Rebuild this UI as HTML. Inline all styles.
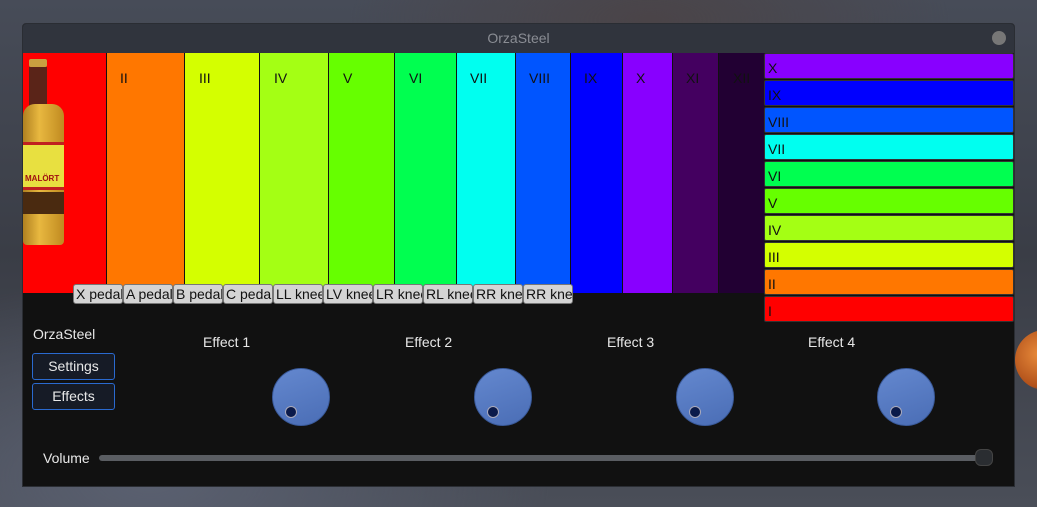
<!DOCTYPE html>
<html><head><style>
*{margin:0;padding:0;box-sizing:border-box}
body{width:1037px;height:507px;overflow:hidden;position:relative;font-family:"Liberation Sans","DejaVu Sans",sans-serif;
background:radial-gradient(ellipse 300px 120px at 650px 20px,#4a4448,transparent),radial-gradient(ellipse 400px 200px at 150px 480px,#5a6070,transparent),linear-gradient(180deg,#474c58 0%,#3a3d46 50%,#4a4e58 100%);}
.abs{position:absolute}
.win{left:22px;top:23px;width:993px;height:464px;background:#111;border:1px solid #2a2d33;border-radius:4px 4px 0 0;overflow:hidden}
.title{left:0;top:0;width:100%;height:29px;background:#30343d;color:#8a8d94;font-size:14px;text-align:center;line-height:29px}
.col{top:29px;height:240px;border-left:1px solid #111;font-size:14px;color:#111}
.col span{position:absolute;top:17px}
.row{left:741px;width:250px;height:26px;border:1px solid #333;border-radius:2px;font-size:14px;color:#111;padding-left:3px;line-height:28px}
.ped{top:260px;height:20px;width:50px;background:#d4d4d4;border:1px solid #777;border-radius:3px;font-size:14px;color:#111;line-height:18px;padding-left:2px;overflow:hidden;white-space:nowrap}
.lbl{color:#e8e8e8;font-size:14px}
.btn{left:9px;width:83px;height:27px;border:1px solid #2a6ad0;border-radius:3px;background:#161b26;color:#e8e8e8;font-size:14px;text-align:center;line-height:25px}
.knob{width:58px;height:58px;border-radius:50%;background:linear-gradient(160deg,#6488cf,#4a6db5);border:1px solid #3a5a9a;top:344px}
.dot{width:12px;height:12px;border-radius:50%;background:#0a1a4a;border:1px solid #aab;position:absolute;left:12px;top:37px}
</style></head><body>
<div class="abs" style="left:1015px;top:330px;width:60px;height:60px;border-radius:50%;background:radial-gradient(circle at 40% 40%,#e88a3a,#b0501a 65%,transparent 72%)"></div>
<div class="abs win">
 <div class="abs title">OrzaSteel<div class="abs" style="right:8px;top:7px;width:14px;height:14px;border-radius:50%;background:#777"></div></div>
 <div class="abs col" style="left:0;width:84px;background:#ff0000;border-left:none"></div>
 <div class="abs col" style="left:83px;width:78px;background:#ff7700"><span style="left:13px">II</span></div>
 <div class="abs col" style="left:161px;width:75px;background:#d4ff00"><span style="left:14px">III</span></div>
 <div class="abs col" style="left:236px;width:69px;background:#a4ff14"><span style="left:14px">IV</span></div>
 <div class="abs col" style="left:305px;width:66px;background:#66ff00"><span style="left:14px">V</span></div>
 <div class="abs col" style="left:371px;width:62px;background:#00ff50"><span style="left:14px">VI</span></div>
 <div class="abs col" style="left:433px;width:59px;background:#00fff0"><span style="left:13px">VII</span></div>
 <div class="abs col" style="left:492px;width:55px;background:#0055ff"><span style="left:13px">VIII</span></div>
 <div class="abs col" style="left:547px;width:52px;background:#0000ff"><span style="left:13px">IX</span></div>
 <div class="abs col" style="left:599px;width:50px;background:#8800ff"><span style="left:13px">X</span></div>
 <div class="abs col" style="left:649px;width:46px;background:#440060"><span style="left:13px">XI</span></div>
 <div class="abs col" style="left:695px;width:46px;background:#220033"><span style="left:14px">XII</span></div>
 <!-- bottle -->
 <div class="abs" style="left:6px;top:35px;width:18px;height:8px;background:#c9a040;border-radius:2px"></div>
 <div class="abs" style="left:6px;top:43px;width:18px;height:40px;background:#5a2418"></div>
 <div class="abs" style="left:0;top:80px;width:41px;height:141px;background:linear-gradient(90deg,#b08020,#e8b840 40%,#c08a20);border-radius:12px 12px 4px 4px"></div>
 <div class="abs" style="left:0;top:118px;width:41px;height:48px;background:#e8e040;border-top:3px solid #c02020;border-bottom:3px solid #c02020"></div>
 <div class="abs" style="left:2px;top:150px;font-size:8px;font-weight:bold;color:#a01010">MALÖRT</div>
 <div class="abs" style="left:0;top:168px;width:41px;height:22px;background:#4a2a10"></div>
 <div class="abs row" style="top:29px;background:#8800ff">X</div>
 <div class="abs row" style="top:56px;background:#0000ff">IX</div>
 <div class="abs row" style="top:83px;background:#0055ff">VIII</div>
 <div class="abs row" style="top:110px;background:#00fff0">VII</div>
 <div class="abs row" style="top:137px;background:#00ff50">VI</div>
 <div class="abs row" style="top:164px;background:#66ff00">V</div>
 <div class="abs row" style="top:191px;background:#a4ff14">IV</div>
 <div class="abs row" style="top:218px;background:#d4ff00">III</div>
 <div class="abs row" style="top:245px;background:#ff7700">II</div>
 <div class="abs row" style="top:272px;background:#ff0000">I</div>
 <div class="abs ped" style="left:50px">X pedal</div>
 <div class="abs ped" style="left:100px">A pedal</div>
 <div class="abs ped" style="left:150px">B pedal</div>
 <div class="abs ped" style="left:200px">C pedal</div>
 <div class="abs ped" style="left:250px">LL knee</div>
 <div class="abs ped" style="left:300px">LV knee</div>
 <div class="abs ped" style="left:350px">LR knee</div>
 <div class="abs ped" style="left:400px">RL knee</div>
 <div class="abs ped" style="left:450px">RR knee</div>
 <div class="abs ped" style="left:500px">RR knee</div>
 <div class="abs lbl" style="left:10px;top:302px">OrzaSteel</div>
 <div class="abs btn" style="top:329px">Settings</div>
 <div class="abs btn" style="top:359px">Effects</div>
 <div class="abs lbl" style="left:180px;top:310px">Effect 1</div>
 <div class="abs lbl" style="left:382px;top:310px">Effect 2</div>
 <div class="abs lbl" style="left:584px;top:310px">Effect 3</div>
 <div class="abs lbl" style="left:785px;top:310px">Effect 4</div>
 <div class="abs knob" style="left:249px"><div class="dot"></div></div>
 <div class="abs knob" style="left:451px"><div class="dot"></div></div>
 <div class="abs knob" style="left:653px"><div class="dot"></div></div>
 <div class="abs knob" style="left:854px"><div class="dot"></div></div>
 <div class="abs lbl" style="left:20px;top:426px">Volume</div>
 <div class="abs" style="left:76px;top:431px;width:892px;height:6px;background:#5a5d62;border-radius:3px"></div>
 <div class="abs" style="left:952px;top:425px;width:18px;height:17px;background:#2a2d31;border:1px solid #444;border-radius:6px"></div>
</div>
</body></html>
